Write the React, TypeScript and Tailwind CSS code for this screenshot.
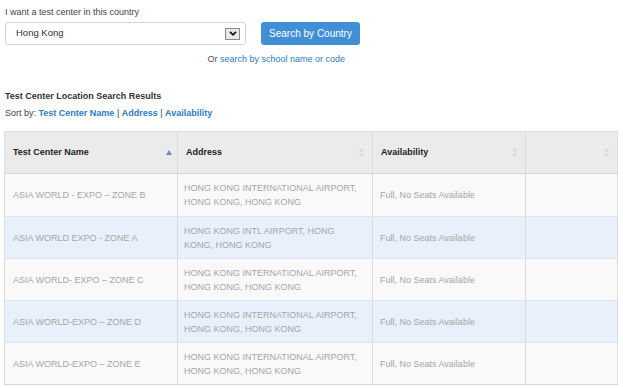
import React from 'react';

const rows = [
  { name: 'ASIA WORLD - EXPO – ZONE B', addr: ['HONG KONG INTERNATIONAL AIRPORT,', 'HONG KONG, HONG KONG'] },
  { name: 'ASIA WORLD EXPO - ZONE A', addr: ['HONG KONG INTL AIRPORT, HONG', 'KONG, HONG KONG'] },
  { name: 'ASIA WORLD- EXPO – ZONE C', addr: ['HONG KONG INTERNATIONAL AIRPORT,', 'HONG KONG, HONG KONG'] },
  { name: 'ASIA WORLD-EXPO – ZONE D', addr: ['HONG KONG INTERNATIONAL AIRPORT,', 'HONG KONG, HONG KONG'] },
  { name: 'ASIA WORLD-EXPO – ZONE E', addr: ['HONG KONG INTERNATIONAL AIRPORT,', 'HONG KONG, HONG KONG'] },
];

const SortBoth = () => (
  <svg width="5" height="9" viewBox="0 0 5 9" className="shrink-0">
    <path d="M2.5 0 L5 3.5 H0 Z" fill="#d9d9d9" />
    <path d="M2.5 9 L5 5.5 H0 Z" fill="#d9d9d9" />
  </svg>
);

const SortUp = () => (
  <svg width="6" height="5" viewBox="0 0 6 5" className="shrink-0">
    <path d="M3 0 L6 5 H0 Z" fill="#7384d8" />
  </svg>
);

const HeaderCell = ({ label, up, w }: { label: string; up?: boolean; w: string }) => (
  <div className={`${w} h-full flex items-center justify-between pl-[8px] ${up ? 'pr-[5px]' : 'pr-[8px]'} border-r border-[#dadada] last:border-r-0`}>
    <span className="font-bold text-[9px] text-[#222] whitespace-nowrap">{label}</span>
    {up ? <SortUp /> : <SortBoth />}
  </div>
);

export default function App() {
  return (
    <div className="w-[623px] h-[388px] bg-white overflow-hidden text-[#333] font-['Liberation_Sans',Arial,sans-serif]">
      <div className="pl-[5px] pt-[6px]">
        <div className="text-[9px] text-[#444] leading-[12px]">I want a test center in this country</div>
        <div className="flex items-center mt-[4px]">
          <div className="w-[241px] h-[23px] border border-[#d4d4d4] rounded-[3px] flex items-center justify-between pl-[10px] pr-[5px]">
            <span className="text-[9.5px] text-[#333]">Hong Kong</span>
            <div className="w-[15px] h-[12px] border border-[#8a8a8a] bg-[#e9e9e9] flex items-center justify-center">
              <svg width="8" height="5" viewBox="0 0 8 5">
                <path d="M1 0.8 L4 3.8 L7 0.8" stroke="#111" strokeWidth="1.7" fill="none" />
              </svg>
            </div>
          </div>
          <div className="ml-[15px] w-[99px] h-[23px] rounded-[3px] bg-[#4190d6] flex items-center justify-center text-white text-[10px]">
            Search by Country
          </div>
        </div>
        <div className="w-[340px] text-right text-[9px] mt-[8px] leading-[12px] text-[#555]">
          Or <span className="text-[#2d7cbf]">search by school name or code</span>
        </div>
        <div className="mt-[25px] text-[9px] font-bold text-[#333] leading-[12px]">Test Center Location Search Results</div>
        <div className="mt-[5px] text-[9px] leading-[12px] text-[#444]">
          Sort by: <span className="font-bold text-[#2d7cbf]">Test Center Name</span> |{' '}
          <span className="font-bold text-[#2d7cbf]">Address</span> |{' '}
          <span className="font-bold text-[#2d7cbf]">Availability</span>
        </div>
      </div>
      <div className="ml-[4px] mt-[12px] w-[614px] border border-[#dedede] border-b-[#d8d8d8]">
        <div className="flex h-[42px] bg-[#ebebeb] border-b border-[#d6d6d6]">
          <HeaderCell label="Test Center Name" up w="w-[173px]" />
          <HeaderCell label="Address" w="w-[195px]" />
          <HeaderCell label="Availability" w="w-[153px]" />
          <HeaderCell label="" w="flex-1" />
        </div>
        {rows.map((r, i) => (
          <div
            key={i}
            className={`flex h-[42px] text-[9px] text-[#a6a6a6] leading-[14px] whitespace-nowrap ${i % 2 === 1 ? 'bg-[#e8f0fb]' : 'bg-[#f9f9f9]'} ${i > 0 ? 'border-t border-[#dfe4ea]' : ''}`}
          >
            <div className="w-[173px] flex items-center pl-[8px] border-r border-[#dadada]">{r.name}</div>
            <div className="w-[195px] flex flex-col justify-center pl-[6px] border-r border-[#dadada]">
              <span>{r.addr[0]}</span>
              <span>{r.addr[1]}</span>
            </div>
            <div className="w-[153px] flex items-center pl-[7px] border-r border-[#dadada]">Full, No Seats Available</div>
            <div className="flex-1" />
          </div>
        ))}
      </div>
    </div>
  );
}
